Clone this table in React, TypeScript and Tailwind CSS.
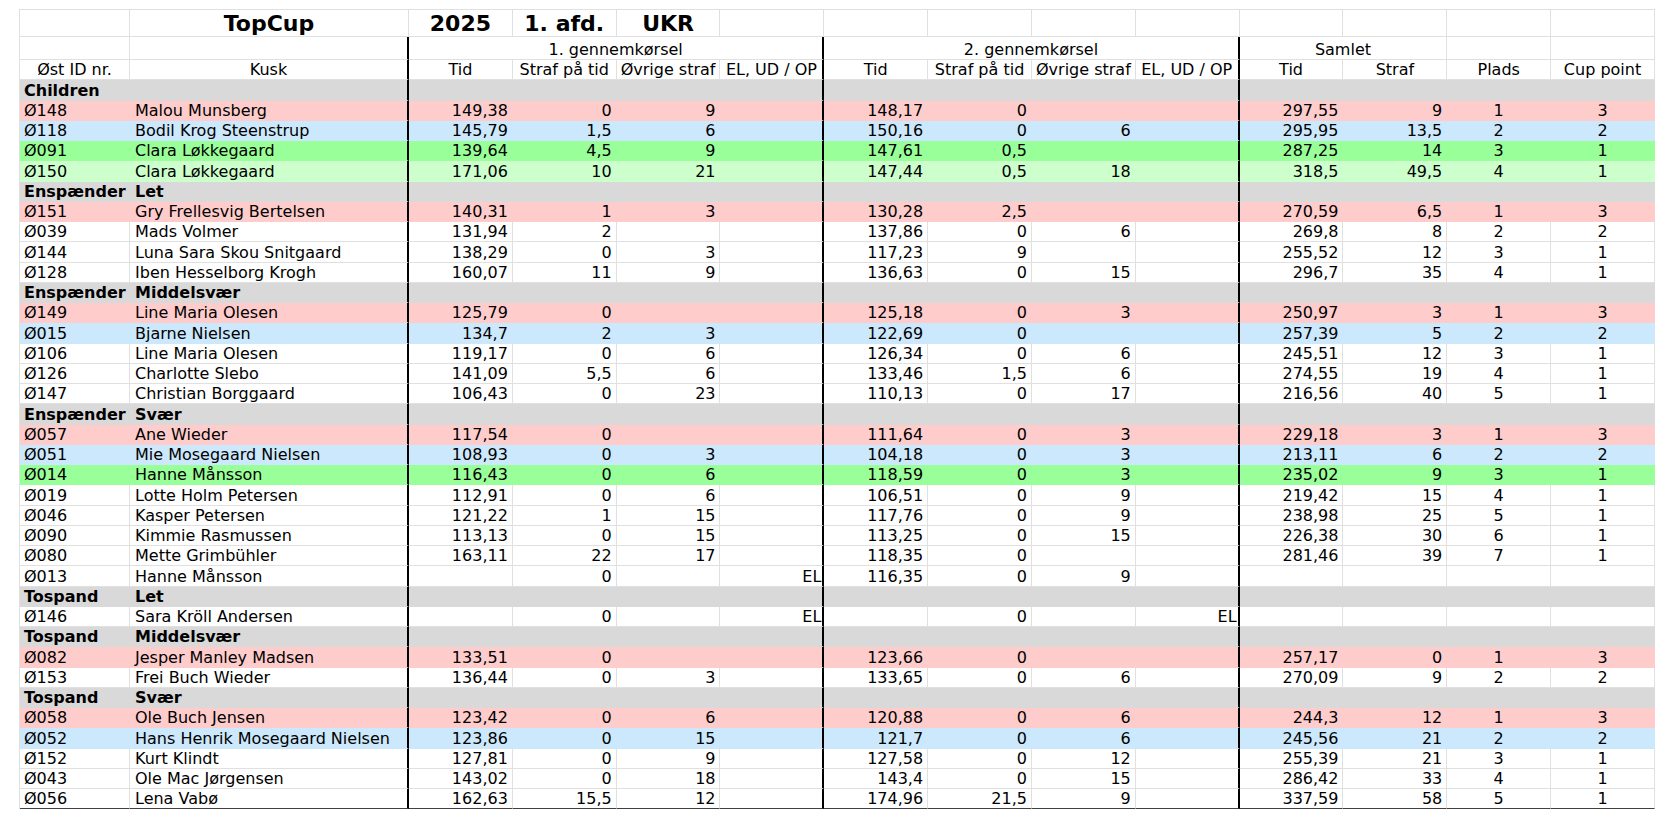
import clsx from "clsx";

type Tone = "white" | "pink" | "blue" | "green" | "mint";

type Row =
  | { kind: "group"; a: string; b?: string }
  | { kind: "data"; tone: Tone; v: string[] };

const toneBg: Record<Tone, string> = {
  white: "bg-white",
  pink: "bg-[#ffcccc]",
  blue: "bg-[#cce8fc]",
  green: "bg-[#99ff99]",
  mint: "bg-[#ccffcc]",
};

const d = (tone: Tone, ...v: string[]): Row => ({ kind: "data", tone, v });
const g = (a: string, b?: string): Row => ({ kind: "group", a, b });

// id, kusk, 1.gen (tid, straf, øvrige, el), 2.gen (tid, straf, øvrige, el), samlet tid, straf, plads, cup
const rows: Row[] = [
  g("Children"),
  d("pink", "Ø148", "Malou Munsberg", "149,38", "0", "9", "", "148,17", "0", "", "", "297,55", "9", "1", "3"),
  d("blue", "Ø118", "Bodil Krog Steenstrup", "145,79", "1,5", "6", "", "150,16", "0", "6", "", "295,95", "13,5", "2", "2"),
  d("green", "Ø091", "Clara Løkkegaard", "139,64", "4,5", "9", "", "147,61", "0,5", "", "", "287,25", "14", "3", "1"),
  d("mint", "Ø150", "Clara Løkkegaard", "171,06", "10", "21", "", "147,44", "0,5", "18", "", "318,5", "49,5", "4", "1"),
  g("Enspænder", "Let"),
  d("pink", "Ø151", "Gry Frellesvig Bertelsen", "140,31", "1", "3", "", "130,28", "2,5", "", "", "270,59", "6,5", "1", "3"),
  d("white", "Ø039", "Mads Volmer", "131,94", "2", "", "", "137,86", "0", "6", "", "269,8", "8", "2", "2"),
  d("white", "Ø144", "Luna Sara Skou Snitgaard", "138,29", "0", "3", "", "117,23", "9", "", "", "255,52", "12", "3", "1"),
  d("white", "Ø128", "Iben Hesselborg Krogh", "160,07", "11", "9", "", "136,63", "0", "15", "", "296,7", "35", "4", "1"),
  g("Enspænder", "Middelsvær"),
  d("pink", "Ø149", "Line Maria Olesen", "125,79", "0", "", "", "125,18", "0", "3", "", "250,97", "3", "1", "3"),
  d("blue", "Ø015", "Bjarne Nielsen", "134,7", "2", "3", "", "122,69", "0", "", "", "257,39", "5", "2", "2"),
  d("white", "Ø106", "Line Maria Olesen", "119,17", "0", "6", "", "126,34", "0", "6", "", "245,51", "12", "3", "1"),
  d("white", "Ø126", "Charlotte Slebo", "141,09", "5,5", "6", "", "133,46", "1,5", "6", "", "274,55", "19", "4", "1"),
  d("white", "Ø147", "Christian Borggaard", "106,43", "0", "23", "", "110,13", "0", "17", "", "216,56", "40", "5", "1"),
  g("Enspænder", "Svær"),
  d("pink", "Ø057", "Ane Wieder", "117,54", "0", "", "", "111,64", "0", "3", "", "229,18", "3", "1", "3"),
  d("blue", "Ø051", "Mie Mosegaard Nielsen", "108,93", "0", "3", "", "104,18", "0", "3", "", "213,11", "6", "2", "2"),
  d("green", "Ø014", "Hanne Månsson", "116,43", "0", "6", "", "118,59", "0", "3", "", "235,02", "9", "3", "1"),
  d("white", "Ø019", "Lotte Holm Petersen", "112,91", "0", "6", "", "106,51", "0", "9", "", "219,42", "15", "4", "1"),
  d("white", "Ø046", "Kasper Petersen", "121,22", "1", "15", "", "117,76", "0", "9", "", "238,98", "25", "5", "1"),
  d("white", "Ø090", "Kimmie Rasmussen", "113,13", "0", "15", "", "113,25", "0", "15", "", "226,38", "30", "6", "1"),
  d("white", "Ø080", "Mette Grimbühler", "163,11", "22", "17", "", "118,35", "0", "", "", "281,46", "39", "7", "1"),
  d("white", "Ø013", "Hanne Månsson", "", "0", "", "EL", "116,35", "0", "9", "", "", "", "", ""),
  g("Tospand", "Let"),
  d("white", "Ø146", "Sara Kröll Andersen", "", "0", "", "EL", "", "0", "", "EL", "", "", "", ""),
  g("Tospand", "Middelsvær"),
  d("pink", "Ø082", "Jesper Manley Madsen", "133,51", "0", "", "", "123,66", "0", "", "", "257,17", "0", "1", "3"),
  d("white", "Ø153", "Frei Buch Wieder", "136,44", "0", "3", "", "133,65", "0", "6", "", "270,09", "9", "2", "2"),
  g("Tospand", "Svær"),
  d("pink", "Ø058", "Ole Buch Jensen", "123,42", "0", "6", "", "120,88", "0", "6", "", "244,3", "12", "1", "3"),
  d("blue", "Ø052", "Hans Henrik Mosegaard Nielsen", "123,86", "0", "15", "", "121,7", "0", "6", "", "245,56", "21", "2", "2"),
  d("white", "Ø152", "Kurt Klindt", "127,81", "0", "9", "", "127,58", "0", "12", "", "255,39", "21", "3", "1"),
  d("white", "Ø043", "Ole Mac Jørgensen", "143,02", "0", "18", "", "143,4", "0", "15", "", "286,42", "33", "4", "1"),
  d("white", "Ø056", "Lena Vabø", "162,63", "15,5", "12", "", "174,96", "21,5", "9", "", "337,59", "58", "5", "1"),
];

const GRID = "grid grid-cols-[110px_279px_repeat(12,103.83px)]";
const THICK = new Set([1, 5, 9]);
const subHeads = [
  "Øst ID nr.", "Kusk",
  "Tid", "Straf på tid", "Øvrige straf", "EL, UD / OP",
  "Tid", "Straf på tid", "Øvrige straf", "EL, UD / OP",
  "Tid", "Straf", "Plads", "Cup point",
];

function alignFor(i: number) {
  if (i === 0) return "justify-start pl-[4px]";
  if (i === 1) return "justify-start pl-[5px]";
  if (i >= 12) return "justify-center";
  if (i === 5 || i === 9) return "justify-end pr-[1px]";
  return "justify-end pr-[4px]";
}

function Cell({
  i,
  children,
  ruled,
  last,
  bold,
  thick = true,
  align,
  span,
}: {
  i: number;
  children?: React.ReactNode;
  ruled: boolean;
  last?: boolean;
  bold?: boolean;
  thick?: boolean;
  align?: string;
  span?: string;
}) {
  const heavy = thick && THICK.has(i);
  return (
    <div
      className={clsx(
        "flex items-end whitespace-nowrap border-b leading-[18px]",
        heavy ? "border-r-2" : "border-r",
        ruled ? "border-[#e0e0e0]" : "border-transparent",
        heavy && "border-r-black",
        last && "border-b-[#404040]",
        align ?? alignFor(i),
        bold && "font-bold",
        span,
      )}
    >
      {children}
    </div>
  );
}

export default function App() {
  return (
    <div className="min-h-screen bg-white pl-[19px] pt-[9px] font-['DejaVu_Sans',sans-serif] text-[16px] text-black">
      <div className="w-[1636px] border-l border-t border-[#e0e0e0]">
        {/* title row */}
        <div className={clsx(GRID, "h-[27px] text-[22px] font-bold")}>
          {Array.from({ length: 14 }, (_, i) => (
            <Cell key={i} i={i} ruled thick={false} align="justify-center leading-[25px]">
              {["", "TopCup", "2025", "1. afd.", "UKR"][i] ?? ""}
            </Cell>
          ))}
        </div>

        {/* run headers */}
        <div className={clsx(GRID, "h-[23px]")}>
          <Cell i={0} ruled />
          <Cell i={1} ruled />
          <Cell i={5} ruled span="col-span-4" align="justify-center">1. gennemkørsel</Cell>
          <Cell i={9} ruled span="col-span-4" align="justify-center">2. gennemkørsel</Cell>
          <Cell i={11} ruled span="col-span-2" align="justify-center">Samlet</Cell>
          <Cell i={12} ruled />
          <Cell i={13} ruled />
        </div>

        {/* column headers */}
        <div className={clsx(GRID, "h-[20.3px]")}>
          {subHeads.map((h, i) => (
            <Cell key={i} i={i} ruled align="justify-center">
              {h}
            </Cell>
          ))}
        </div>

        {rows.map((r, ri) => {
          const last = ri === rows.length - 1;
          if (r.kind === "group") {
            return (
              <div key={ri} className={clsx(GRID, "h-[20.25px] bg-[#d9d9d9]")}>
                {Array.from({ length: 14 }, (_, i) => (
                  <Cell key={i} i={i} ruled={false} bold={i < 2}>
                    {i === 0 ? r.a : i === 1 ? r.b ?? "" : ""}
                  </Cell>
                ))}
              </div>
            );
          }
          const ruled = r.tone === "white";
          return (
            <div key={ri} className={clsx(GRID, "h-[20.25px]", toneBg[r.tone])}>
              {r.v.map((v, i) => (
                <Cell key={i} i={i} ruled={ruled} last={last}>
                  {v}
                </Cell>
              ))}
            </div>
          );
        })}
      </div>
    </div>
  );
}
